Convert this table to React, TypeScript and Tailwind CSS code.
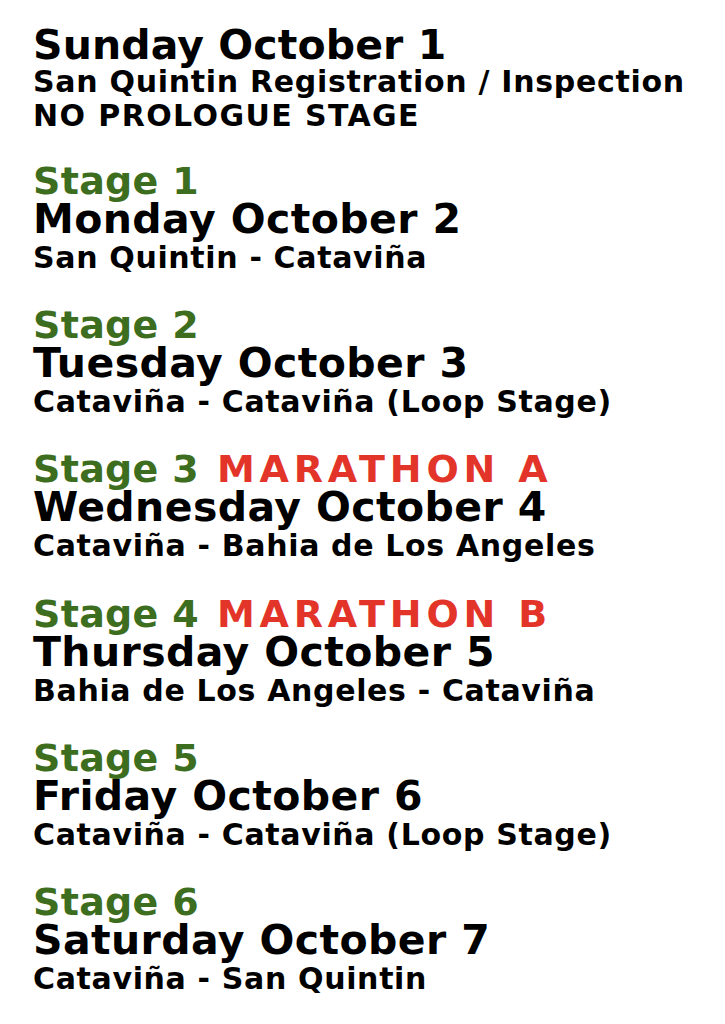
import React from 'react';

type Stage = {
  label: string;
  marathon?: string;
  date: string;
  route: string;
};

const stages: Stage[] = [
  { label: 'Stage 1', date: 'Monday October 2', route: 'San Quintin - Cataviña' },
  { label: 'Stage 2', date: 'Tuesday October 3', route: 'Cataviña - Cataviña (Loop Stage)' },
  { label: 'Stage 3', marathon: 'MARATHON A', date: 'Wednesday October 4', route: 'Cataviña - Bahia de Los Angeles' },
  { label: 'Stage 4', marathon: 'MARATHON B', date: 'Thursday October 5', route: 'Bahia de Los Angeles - Cataviña' },
  { label: 'Stage 5', date: 'Friday October 6', route: 'Cataviña - Cataviña (Loop Stage)' },
  { label: 'Stage 6', date: 'Saturday October 7', route: 'Cataviña - San Quintin' },
];

const App: React.FC = () => {
  return (
    <div className="w-[725px] min-h-[1024px] bg-white pl-[33px] pt-[25px] font-['DejaVu_Sans',sans-serif] font-bold text-black">
      <div className="mb-[28px]">
        <h1 className="text-[41px] leading-[40px] tracking-[0.1px]">Sunday October 1</h1>
        <p className="text-[30px] leading-[33px] tracking-[0.7px]">San Quintin Registration / Inspection</p>
        <p className="text-[30px] leading-[35px] tracking-[1.4px]">NO PROLOGUE STAGE</p>
      </div>

      <div className="flex flex-col gap-[26.2px]">
        {stages.map((s) => (
          <div key={s.date}>
            <div className="text-[38px] leading-[40px] tracking-[0.3px]">
              <span className="text-[#3d6e20]">{s.label}</span>
              {s.marathon && <span className="text-[#e3342a] tracking-[4.8px]"> {s.marathon}</span>}
            </div>
            <h2 className="text-[41px] leading-[36px] tracking-[0.4px]">{s.date}</h2>
            <p className="text-[30px] leading-[42px] tracking-[0.65px]">{s.route}</p>
          </div>
        ))}
      </div>
    </div>
  );
};

export default App;
